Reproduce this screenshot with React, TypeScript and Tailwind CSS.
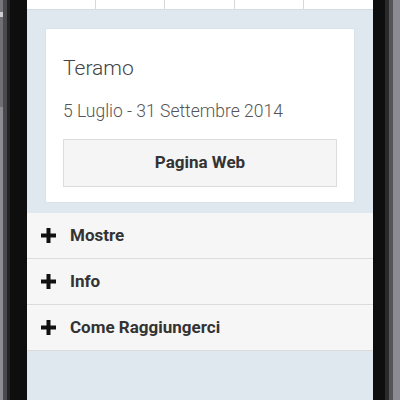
import React from 'react';

function Plus() {
  return (
    <svg width="15" height="15" viewBox="0 0 15 15" className="shrink-0">
      <rect x="5.5" y="0" width="4" height="15" fill="#111" />
      <rect x="0" y="5.5" width="15" height="4" fill="#111" />
    </svg>
  );
}

const items = ['Mostre', 'Info', 'Come Raggiungerci'];

export default function App() {
  return (
    <div className="w-[400px] h-[400px] overflow-hidden flex bg-[#1a1a1a] font-['Roboto',sans-serif]">
      {/* left frame */}
      <div className="w-[27px] h-full flex">
        <div className="w-[3px] h-full bg-[#8c8c92] flex flex-col">
          <div className="h-[12px] bg-[#77777c]" />
          <div className="h-[5px] bg-[#cfcfd2]" />
          <div className="h-[90px] bg-[#6f6f74]" />
        </div>
        <div className="w-[4px] h-full bg-[#4a4a4e]" />
        <div className="w-[3px] h-full bg-[#222]" />
        <div className="flex-1 h-full bg-[#0e0e0e]" />
      </div>

      {/* screen */}
      <div className="w-[346px] h-full bg-[#dfe8ef] flex flex-col">
        <div className="h-[10px] shrink-0 grid grid-cols-5 bg-white border-b border-[#d6dde2]">
          <div className="border-r border-[#d8d8d8]" />
          <div className="border-r border-[#d8d8d8]" />
          <div className="border-r border-[#d8d8d8]" />
          <div className="border-r border-[#d8d8d8]" />
          <div />
        </div>

        <div className="px-[18px] pt-[18px] pb-[10px]">
          <div className="bg-white border border-[#d9e2e8] px-[17px] pt-[27px] pb-[15px]">
            <div className="text-[21px] font-light leading-[24px] text-[#444]">Teramo</div>
            <div className="mt-[21px] text-[17.5px] font-light leading-[20px] text-[#555]">
              5 Luglio - 31 Settembre 2014
            </div>
            <div className="mt-[18px] h-[48px] bg-[#f5f5f5] border border-[#dddddd] flex items-center justify-center text-[17px] font-bold text-[#333]">
              Pagina Web
            </div>
          </div>
        </div>

        <div className="flex flex-col">
          {items.map((t) => (
            <div
              key={t}
              className="h-[46px] bg-[#f6f6f6] border-b border-[#dcdcdc] flex items-center pl-[14px] gap-[14px]"
            >
              <Plus />
              <span className="text-[17px] font-bold text-[#333]">{t}</span>
            </div>
          ))}
        </div>
      </div>

      {/* right frame */}
      <div className="flex-1 h-full flex">
        <div className="w-[12px] h-full bg-[#0e0e0e]" />
        <div className="w-[4px] h-full bg-[#2a2a2a]" />
        <div className="w-[4px] h-full bg-[#555559]" />
        <div className="flex-1 h-full bg-[#8a8a90]" />
      </div>
    </div>
  );
}
